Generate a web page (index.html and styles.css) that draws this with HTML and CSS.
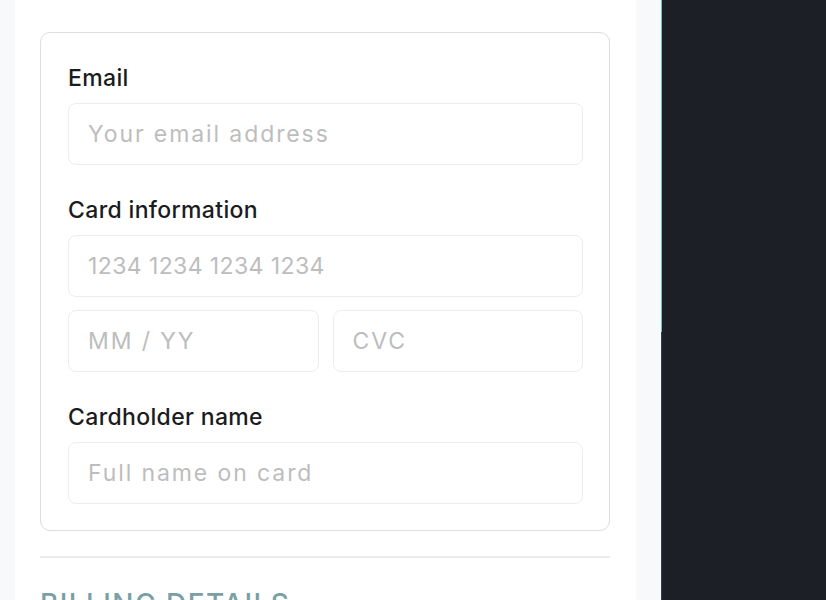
FILE: index.html
```html
<!DOCTYPE html>
<html lang="en">
<head>
<meta charset="utf-8">
<title>Payment</title>
<link rel="stylesheet" href="styles.css">
</head>
<body>
<div class="layout">
  <main class="main">
    <form class="card">
      <div class="field">
        <label class="label" for="email">Email</label>
        <input class="input" id="email" type="text" placeholder="Your email address">
      </div>
      <div class="field">
        <label class="label" for="card">Card information</label>
        <input class="input input-numeric" id="card" type="text" placeholder="1234 1234 1234 1234">
        <div class="row">
          <input class="input" type="text" placeholder="MM / YY">
          <input class="input" type="text" placeholder="CVC">
        </div>
      </div>
      <div class="field">
        <label class="label" for="name">Cardholder name</label>
        <input class="input" id="name" type="text" placeholder="Full name on card">
      </div>
    </form>
    <hr class="divider">
    <h2 class="section-title">Billing details</h2>
  </main>
  <div class="gutter"></div>
  <div class="rail"></div>
  <aside class="sidebar"></aside>
</div>
</body>
</html>
```
FILE: styles.css
```css
* { box-sizing: border-box; }
html, body { margin: 0; padding: 0; height: 100%; overflow: hidden; }
body {
  background: #f8f9fb;
  font-family: Inter, "DejaVu Sans", sans-serif;
  color: #1b1b1d;
}
.layout {
  display: grid;
  grid-template-columns: 15px 621px 25px 1px 1fr;
  height: 600px;
}
.main {
  grid-column: 2;
  background: #ffffff;
  padding: 32px 26px 0 25px;
  overflow: hidden;
}
.gutter { background: #f8f9fb; }
.rail {
  background: linear-gradient(#6fc0b2 0 332px, #3a3e46 332px);
}
.sidebar { background: #1c1f26; }
.card {
  border: 1px solid #dcdce4;
  border-radius: 10px;
  padding: 31px 26px 26px 27px;
  display: flex;
  flex-direction: column;
  gap: 31px;
  margin: 0;
}
.field {
  display: flex;
  flex-direction: column;
  gap: 13px;
}
.label {
  font-size: 23px;
  line-height: 28px;
  font-weight: 500;
  letter-spacing: 0.35px;
  margin-bottom: -2px;
  color: #1b1b1d;
}
.input {
  display: block;
  width: 100%;
  height: 62px;
  border: 1px solid #ededf0;
  border-radius: 8px;
  padding: 0 19px;
  font-family: Inter, "DejaVu Sans", sans-serif;
  font-size: 23px;
  letter-spacing: 1.9px;
  background: #ffffff;
  color: #1b1b1d;
  outline: none;
}
.input-numeric { letter-spacing: 0.4px; }
.input::placeholder { color: #bdbdbd; opacity: 1; }
.row {
  display: grid;
  grid-template-columns: 1fr 1fr;
  gap: 14px;
}
.divider {
  border: 0;
  border-top: 2px solid #ececef;
  margin: 25px 0 0;
}
.section-title {
  margin: 29px 0 0;
  font-size: 28px;
  line-height: 34px;
  font-weight: 500;
  letter-spacing: 1.4px;
  text-transform: uppercase;
  color: #7a9fa4;
}
```
